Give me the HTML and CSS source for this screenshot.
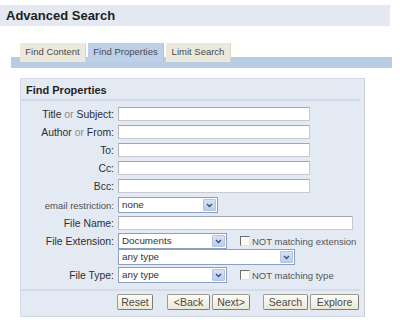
FILE: index.html
```html
<!DOCTYPE html>
<html lang="en">
<head>
  <meta charset="UTF-8" />
  <title>Advanced Search</title>
  <link rel="stylesheet" href="styles.css">
</head>
<body>
  <h1 class="title-bar">Advanced Search</h1>

  <div class="tab-strip">
    <span class="tab tab-content">Find Content</span>
    <span class="tab tab-props tab-active">Find Properties</span>
    <span class="tab tab-limit">Limit Search</span>
  </div>

  <div class="panel">
    <h2 class="panel-title">Find Properties</h2>

    <div class="form-grid">
      <label class="field-label">Title <span class="or">or</span> Subject:</label>
      <div class="control"><input class="text-input w-short" type="text"></div>

      <label class="field-label">Author <span class="or">or</span> From:</label>
      <div class="control"><input class="text-input w-short" type="text"></div>

      <label class="field-label">To:</label>
      <div class="control"><input class="text-input w-short" type="text"></div>

      <label class="field-label">Cc:</label>
      <div class="control"><input class="text-input w-short" type="text"></div>

      <label class="field-label">Bcc:</label>
      <div class="control"><input class="text-input w-short" type="text"></div>

      <label class="field-label light">email restriction:</label>
      <div class="control">
        <div class="select w-email">
          <span class="select-value">none</span>
          <span class="select-arrow"><svg width="7" height="5" viewBox="0 0 7 5"><path d="M1 1 L3.5 3.5 L6 1" stroke="#3c4f78" stroke-width="1.4" fill="none"/></svg></span>
        </div>
      </div>

      <label class="field-label row-name">File Name:</label>
      <div class="control row-name"><input class="text-input w-long" type="text"></div>

      <label class="field-label row-ext">File Extension:</label>
      <div class="control row-ext">
        <div class="select w-ext">
          <span class="select-value">Documents</span>
          <span class="select-arrow"><svg width="7" height="5" viewBox="0 0 7 5"><path d="M1 1 L3.5 3.5 L6 1" stroke="#3c4f78" stroke-width="1.4" fill="none"/></svg></span>
        </div>
        <span class="checkbox"></span>
        <span class="check-text">NOT matching extension</span>
      </div>

      <span class="field-label row-any"></span>
      <div class="control row-any">
        <div class="select w-any">
          <span class="select-value">any type</span>
          <span class="select-arrow"><svg width="7" height="5" viewBox="0 0 7 5"><path d="M1 1 L3.5 3.5 L6 1" stroke="#3c4f78" stroke-width="1.4" fill="none"/></svg></span>
        </div>
      </div>

      <label class="field-label row-type">File Type:</label>
      <div class="control row-type">
        <div class="select w-ext">
          <span class="select-value">any type</span>
          <span class="select-arrow"><svg width="7" height="5" viewBox="0 0 7 5"><path d="M1 1 L3.5 3.5 L6 1" stroke="#3c4f78" stroke-width="1.4" fill="none"/></svg></span>
        </div>
        <span class="checkbox"></span>
        <span class="check-text">NOT matching type</span>
      </div>
    </div>

    <div class="button-row">
      <button class="btn btn-reset">Reset</button>
      <button class="btn btn-back">&lt;Back</button>
      <button class="btn btn-next">Next&gt;</button>
      <button class="btn btn-search">Search</button>
      <button class="btn btn-explore">Explore</button>
    </div>
  </div>
</body>
</html>
```

FILE: styles.css
```css
html {
  box-sizing: border-box;
}
*, *:before, *:after {
  box-sizing: inherit;
}

body {
  margin: 0;
  background: #fff;
  font-family: "Liberation Sans", Arial, sans-serif;
  color: #333;
}

.title-bar {
  margin: 5px 0 0 0;
  width: 390px;
  height: 21px;
  padding-left: 6px;
  background: #e3e8f1;
  font-size: 13px;
  font-weight: 700;
  line-height: 21px;
  color: #1e1e1e;
}

/* Tabs */
.tab-strip {
  display: flex;
  gap: 2px;
  margin: 17px 0 0 11px;
  width: 381px;
  padding: 0 0 6px 9px;
  background: linear-gradient(to bottom, transparent 14px, #b8cce4 14px);
}

.tab {
  height: 19px;
  padding-top: 3px;
  font-size: 9.5px;
  line-height: 11px;
  text-align: center;
  color: #4a4a4a;
  background: #ebe9dc;
  border-right: 1px solid #d9d7c9;
}
.tab-content { width: 66px; }
.tab-props { width: 76px; }
.tab-limit { width: 65px; }
.tab-active {
  background: #bed0e7;
  border-right-color: #b0c3dc;
}

/* Panel */
.panel {
  margin: 10px 0 0 20px;
  width: 345px;
  background: #e4eaf4;
  border: 1px solid #d3dae6;
  border-right-color: #c9ced6;
}

.panel-title {
  margin: 0 4px 0 0;
  padding: 5px 0 2px 5px;
  font-size: 11px;
  line-height: 13px;
  font-weight: 700;
  color: #1f1f1f;
  border-bottom: 2px solid #d4dbe8;
}

.form-grid {
  display: grid;
  grid-template-columns: 93px 1fr;
  column-gap: 4px;
  row-gap: 4px;
  align-items: center;
  margin-top: 6px;
}

.field-label {
  text-align: right;
  font-size: 10.4px;
  font-weight: 400;
  color: #2e2e2e;
  white-space: nowrap;
}
.field-label .or {
  color: #8a8a8a;
}
.field-label.light {
  font-size: 9.5px;
  color: #4f4f4f;
}

.control {
  display: flex;
  align-items: center;
}

.row-name { margin-top: -1px; }
.row-ext { margin-top: -1px; }
.row-any { margin-top: -4px; }
.row-type { margin-top: -2px; }

.text-input {
  height: 14px;
  padding: 0;
  margin: 0;
  background: #fff;
  border: 1px solid #c6c9ce;
  border-top-color: #a3a7ad;
  border-left-color: #b6b9be;
  border-radius: 0;
}
.w-short { width: 192px; }
.w-long { width: 235px; }

/* Drop-down boxes */
.select {
  display: flex;
  align-items: stretch;
  height: 16px;
  background: #fff;
  border: 1px solid #8ba0bd;
}
.w-email { width: 100px; }
.w-ext { width: 109px; }
.w-any { width: 177px; }

.select-value {
  flex: 1;
  padding-left: 3px;
  font-size: 9.8px;
  line-height: 14px;
  color: #333;
}

.select-arrow {
  display: flex;
  align-items: center;
  justify-content: center;
  width: 13px;
  margin: 1px;
  background: linear-gradient(#d6e2f5, #bccdea);
  border: 1px solid #b3c5e3;
  border-radius: 1px;
}

.checkbox {
  width: 10px;
  height: 10px;
  margin-left: 13px;
  background: #fbfbf8;
  border: 1px solid #e2e2dc;
  border-top-color: #6e6e6e;
  border-left-color: #6e6e6e;
}

.check-text {
  margin-left: 2px;
  font-size: 9.5px;
  color: #555;
  white-space: nowrap;
}

/* Buttons */
.button-row {
  display: flex;
  margin: 6px 4px 0 0;
  padding: 3px 0 6px 96px;
  border-top: 2px solid #d4dbe8;
}

.btn {
  height: 16px;
  margin: 0;
  padding: 0;
  font-family: "Liberation Sans", Arial, sans-serif;
  font-size: 10.5px;
  line-height: 14px;
  color: #4a4a4a;
  background: linear-gradient(#fdfcf6, #ebe8d6);
  border: 1px solid #9c9c94;
  border-right-color: #7d7d76;
  border-bottom-color: #7d7d76;
  border-radius: 2px;
}
.btn-reset { width: 36px; }
.btn-back { width: 43px; margin-left: 14px; }
.btn-next { width: 38px; margin-left: 2px; }
.btn-search { width: 45px; margin-left: 13px; }
.btn-explore { width: 49px; margin-left: 2px; }
```
